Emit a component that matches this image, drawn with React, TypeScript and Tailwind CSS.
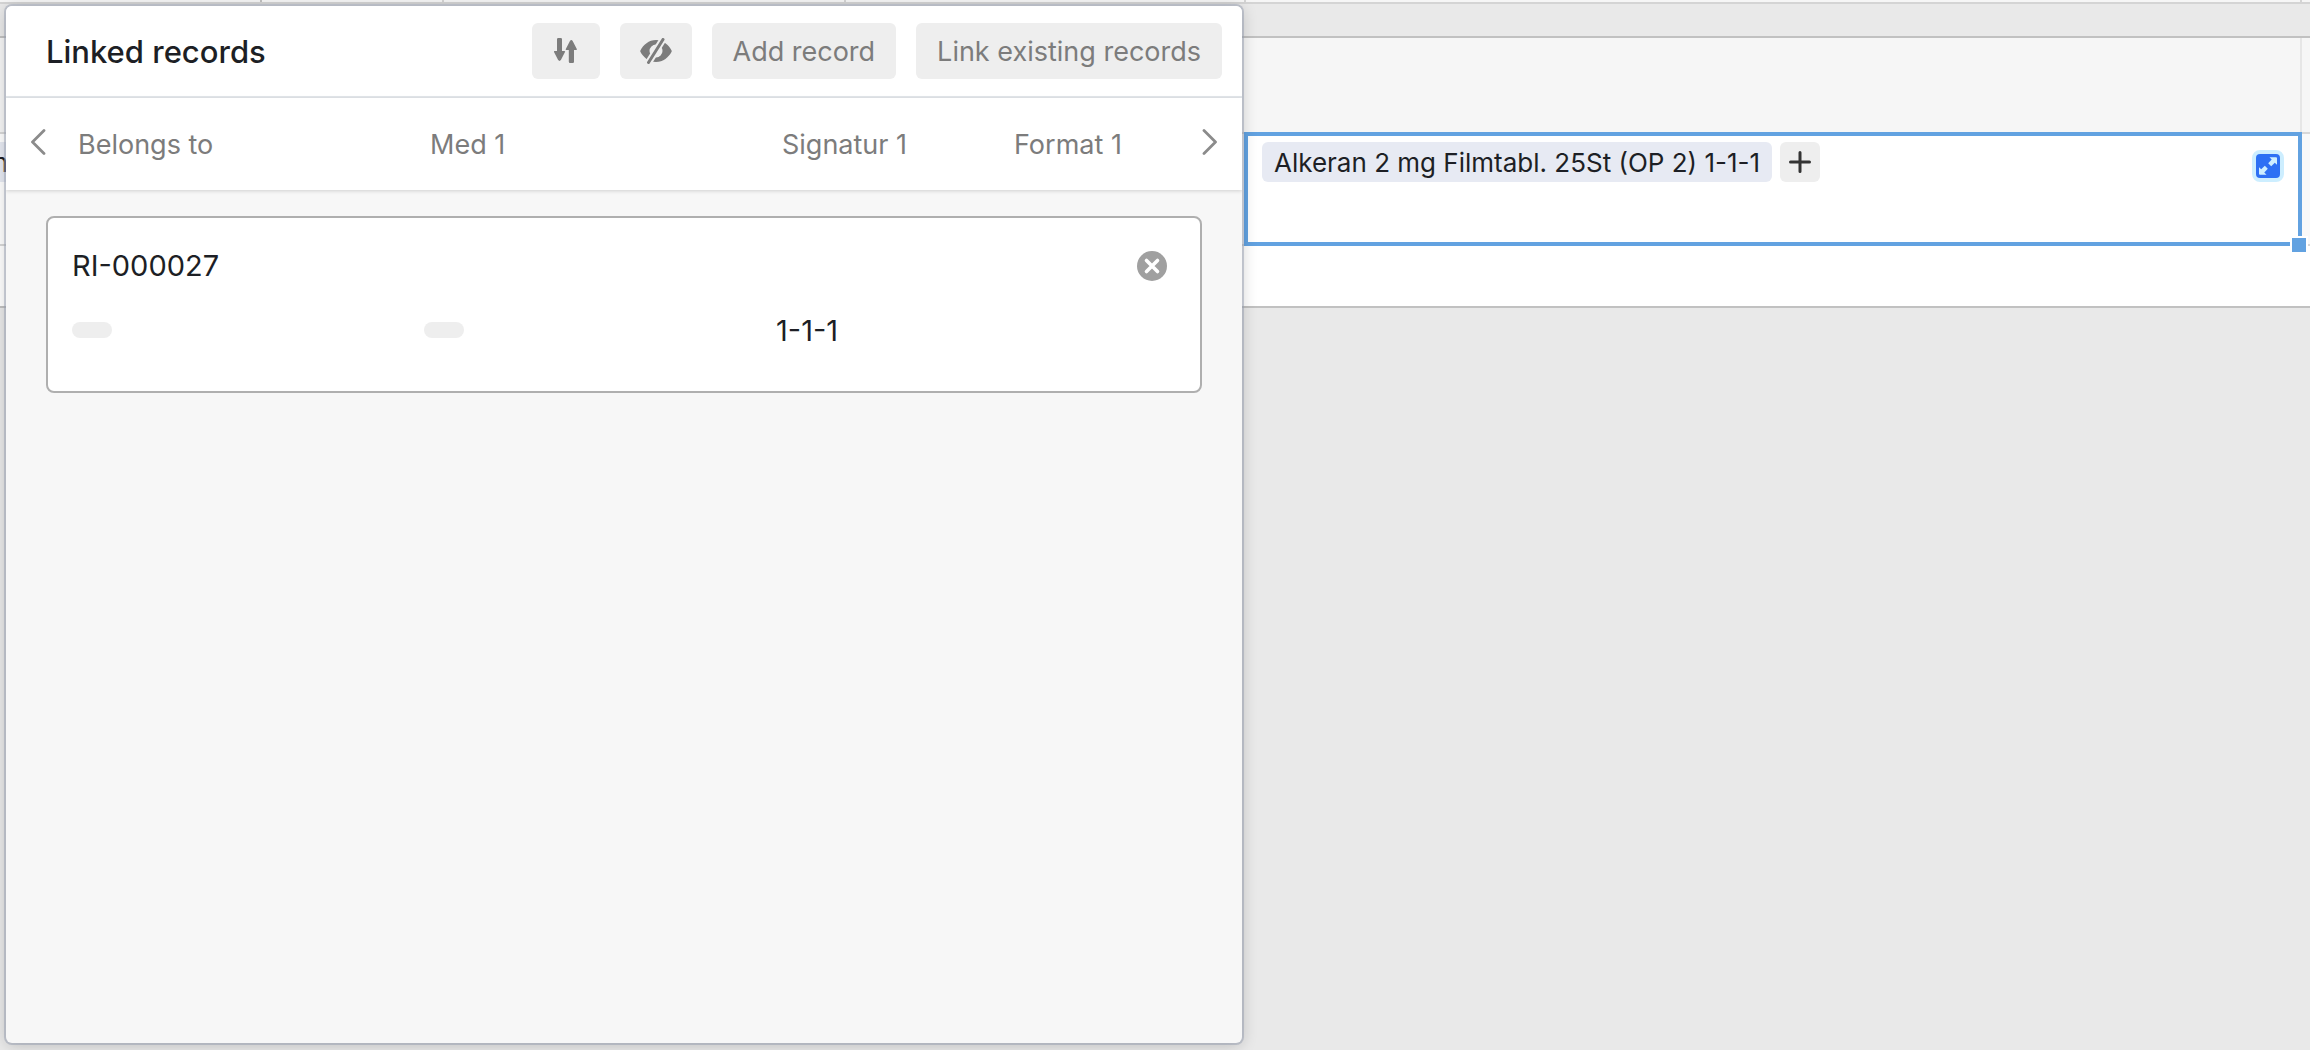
import type { ReactNode } from 'react';

interface Column {
  label: string;
  width: string;
}

const COLUMNS: Column[] = [
  { label: 'Belongs to', width: 'w-[352px]' },
  { label: 'Med 1', width: 'w-[352px]' },
  { label: 'Signatur 1', width: 'w-[232px]' },
  { label: 'Format 1', width: 'w-[160px]' },
];

interface LinkedRecord {
  id: string;
  name: string;
  values: (string | null | undefined)[];
}

// null is an empty link field, undefined a field with nothing to show
const RECORDS: LinkedRecord[] = [{ id: 'rec1', name: 'RI-000027', values: [null, null, '1-1-1', undefined] }];

function SortIcon() {
  return (
    <svg width="24" height="26" viewBox="0 0 24 26" fill="#7c7c7c" aria-hidden="true">
      <path d="M4.2 0h2.6q1.2 0 1.2 1.2V13h2.4q1.2 0 .6 1L7 21.8q-1.5 2.2-3 0L0 14q-.5-1 .6-1H3V1.2Q3 0 4.2 0z" />
      <path d="M16 25q-1.2 0-1.2-1.2V12h-2.4q-1.2 0-.6-1l4-7.8q1.5-2.2 3 0l4 7.8q.5 1-.6 1h-2.2v11.8q0 1.2-1.2 1.2z" />
    </svg>
  );
}

function HiddenIcon() {
  return (
    <svg width="32" height="26" viewBox="0 0 32 26" aria-hidden="true">
      <path
        fill="#7c7c7c"
        fillRule="evenodd"
        d="M16 2C9 2 3 7 .4 12.4q-.3.7 0 1.3C3 19 9 24 16 24s13-5 15.6-10.3q.3-.6 0-1.3C29 7 23 2 16 2zm0 4.5a6.5 6.5 0 1 1 0 13 6.5 6.5 0 0 1 0-13z"
      />
      <path stroke="#eeeeee" strokeWidth="7" d="M24.5-1 7 27" />
      <path stroke="#7c7c7c" strokeWidth="3" strokeLinecap="round" d="M23 1.5 8.5 24.5" />
    </svg>
  );
}

function Chevron({ direction }: { direction: 'left' | 'right' }) {
  return (
    <svg width="16" height="26" viewBox="0 0 16 26" fill="none" stroke="#8b8b8b" strokeWidth="2.8" strokeLinecap="round" strokeLinejoin="round" aria-hidden="true">
      <path d={direction === 'left' ? 'M14 1.5 2.5 13 14 24.5' : 'M2 1.5 13.5 13 2 24.5'} />
    </svg>
  );
}

function IconButton({ label, children }: { label: string; children: ReactNode }) {
  return (
    <button type="button" aria-label={label} className="flex h-14 shrink-0 items-center rounded-md bg-[#eeeeee] px-5">
      {children}
    </button>
  );
}

function TextButton({ children }: { children: ReactNode }) {
  return (
    <button
      type="button"
      className="flex h-14 shrink-0 items-center whitespace-nowrap rounded-md bg-[#eeeeee] px-[21px] pt-0.5 text-[27px] leading-8 text-[#7c7c7c]"
    >
      {children}
    </button>
  );
}

function RecordCard({ record }: { record: LinkedRecord }) {
  return (
    <article className="h-[177px] rounded-lg border-2 border-[#afafaf] bg-white px-6 pt-7">
      <div className="flex h-10 items-center justify-between pr-[9px]">
        <h2 className="text-[29px] leading-10 text-[#1d1f25]">{record.name}</h2>
        <button type="button" aria-label="Unlink record">
          <svg width="30" height="30" viewBox="0 0 30 30" aria-hidden="true">
            <circle cx="15" cy="15" r="15" fill="#a0a0a0" />
            <path stroke="#fff" strokeWidth="3.6" strokeLinecap="round" d="M9.5 9.5l11 11M20.5 9.5l-11 11" />
          </svg>
        </button>
      </div>
      <div className="mt-6 flex h-10 items-center">
        {record.values.map((value, idx) => (
          <div key={COLUMNS[idx].label} className={COLUMNS[idx].width}>
            {value === null && <div className="h-4 w-10 rounded-full bg-[#eeeeee]" />}
            {value && <div className="pt-0.5 text-[29px] leading-8 text-[#1d1f25]">{value}</div>}
          </div>
        ))}
      </div>
    </article>
  );
}

function LinkedRecordsPanel() {
  return (
    <section className="absolute bottom-[7px] left-1.5 top-1.5 flex w-[1236px] flex-col overflow-clip rounded-md bg-[#f7f7f7] shadow-[0_0_0_2px_rgba(150,158,175,0.5),0_2px_16px_rgba(0,0,0,0.2)]">
      <header className="flex h-[92px] shrink-0 items-center justify-between border-b-2 border-[#e3e7eb] bg-white pl-10 pr-5">
        <h1 className="pt-0.5 text-[31px] font-medium leading-10 text-[#1d1f25]">Linked records</h1>
        <div className="flex gap-5">
          <IconButton label="Sort records">
            <span className="px-0.5">
              <SortIcon />
            </span>
          </IconButton>
          <IconButton label="Hidden fields">
            <HiddenIcon />
          </IconButton>
          <TextButton>Add record</TextButton>
          <TextButton>Link existing records</TextButton>
        </div>
      </header>

      <div className="z-10 flex h-[92px] shrink-0 items-center bg-white px-6 shadow-[0_1px_4px_rgba(0,0,0,0.16)]">
        <button type="button" aria-label="Previous fields" className="mr-8 pb-1">
          <Chevron direction="left" />
        </button>
        <div className="flex flex-1 overflow-hidden pt-0.5 text-[27px] leading-8 text-[#7c7c7c]">
          {COLUMNS.map((column) => (
            <div key={column.label} className={`${column.width} shrink-0`}>
              {column.label}
            </div>
          ))}
        </div>
        <button type="button" aria-label="Next fields" className="pb-1">
          <Chevron direction="right" />
        </button>
      </div>

      <div className="flex-1 px-10 pt-[26px]">
        {RECORDS.map((record) => (
          <RecordCard key={record.id} record={record} />
        ))}
      </div>
    </section>
  );
}

function ActiveCell() {
  return (
    <div className="relative flex h-[114px] items-start border-4 border-[#62a2e1] bg-white px-3.5 pt-1.5">
      <span className="flex h-10 items-center whitespace-nowrap rounded-md bg-[#e7eaf3] px-3 pt-0.5 text-[26px] leading-8 text-[#1d1f25]">
        Alkeran 2 mg Filmtabl. 25St (OP 2) 1-1-1
      </span>
      <button type="button" aria-label="Link a record" className="ml-2 flex h-10 w-10 items-center justify-center rounded-md bg-[#eeeeee]">
        <svg width="22" height="22" viewBox="0 0 22 22" stroke="#333" strokeWidth="3" strokeLinecap="round" aria-hidden="true">
          <path d="M11 1.5v19M1.5 11h19" />
        </svg>
      </button>
      <button type="button" aria-label="Expand cell" className="ml-auto mt-2 rounded-lg border-4 border-[#cdeeff] bg-[#cdeeff]">
        <svg width="24" height="24" viewBox="0 0 24 24" aria-hidden="true">
          <rect width="24" height="24" rx="4" fill="#2d70f4" />
          <g fill="#cdeeff">
            <path d="M13.5 3.2H20q1 0 1 1v6.5l-2.2-2-3.6 3.6-3-3 3.5-3.7z" />
            <path d="M10.5 20.8H4q-1 0-1-1v-6.5l2.2 2 3.6-3.6 3 3-3.5 3.7z" />
          </g>
          <path stroke="#2d70f4" strokeWidth="1.2" d="M9 9l6 6" />
        </svg>
      </button>
      {/* fill handle */}
      <div className="absolute -bottom-3 -right-2.5 h-[18px] w-[18px] border-2 border-white bg-[#62a2e1]" />
    </div>
  );
}

export default function App() {
  return (
    <main className="relative min-h-screen overflow-hidden bg-[#e9e9e9] font-[Inter,'Liberation_Sans',sans-serif]">
      <div className="flex h-1 border-b-2 border-[#d4d4d4] bg-[#f6f6f6]">
        <div className="w-[262px] shrink-0 border-r-2 border-[#c1c1c1]" />
        <div className="w-[182px] shrink-0 border-r-2 border-[#d4d4d4]" />
        <div className="w-[402px] shrink-0 border-r-2 border-[#d4d4d4]" />
        <div className="w-[400px] shrink-0 border-r-2 border-[#d4d4d4]" />
        <div className="flex-1 border-r-2 border-[#d4d4d4]" />
        <div className="w-2" />
      </div>
      <div className="h-8" />
      <div className="grid grid-cols-[1244px_1fr_8px] border-y-2 border-[#c1c1c1] bg-white">
        <div className="h-24 border-b-2 border-[#d8d8d8] bg-[#f6f6f6]" />
        <div className="h-[94px] border-r-2 border-[#e6e6e6] bg-[#f6f6f6]" />
        <div className="h-24 border-b-2 border-[#d8d8d8] bg-[#f6f6f6]" />
        <div className="h-28 border-b-2 border-[#d8d8d8] pt-2">
          <div className="flex h-10 w-2 items-center justify-end bg-[#e7eaf3] pt-0.5 text-[26px] leading-8 text-[#1d1f25]">
            n
          </div>
        </div>
        <div className="-mt-0.5">
          <ActiveCell />
        </div>
        <div className="h-28 border-b-2 border-[#d8d8d8] bg-[#f9f9f9]" />
        <div className="col-span-3 h-[60px]" />
      </div>
      <LinkedRecordsPanel />
    </main>
  );
}
